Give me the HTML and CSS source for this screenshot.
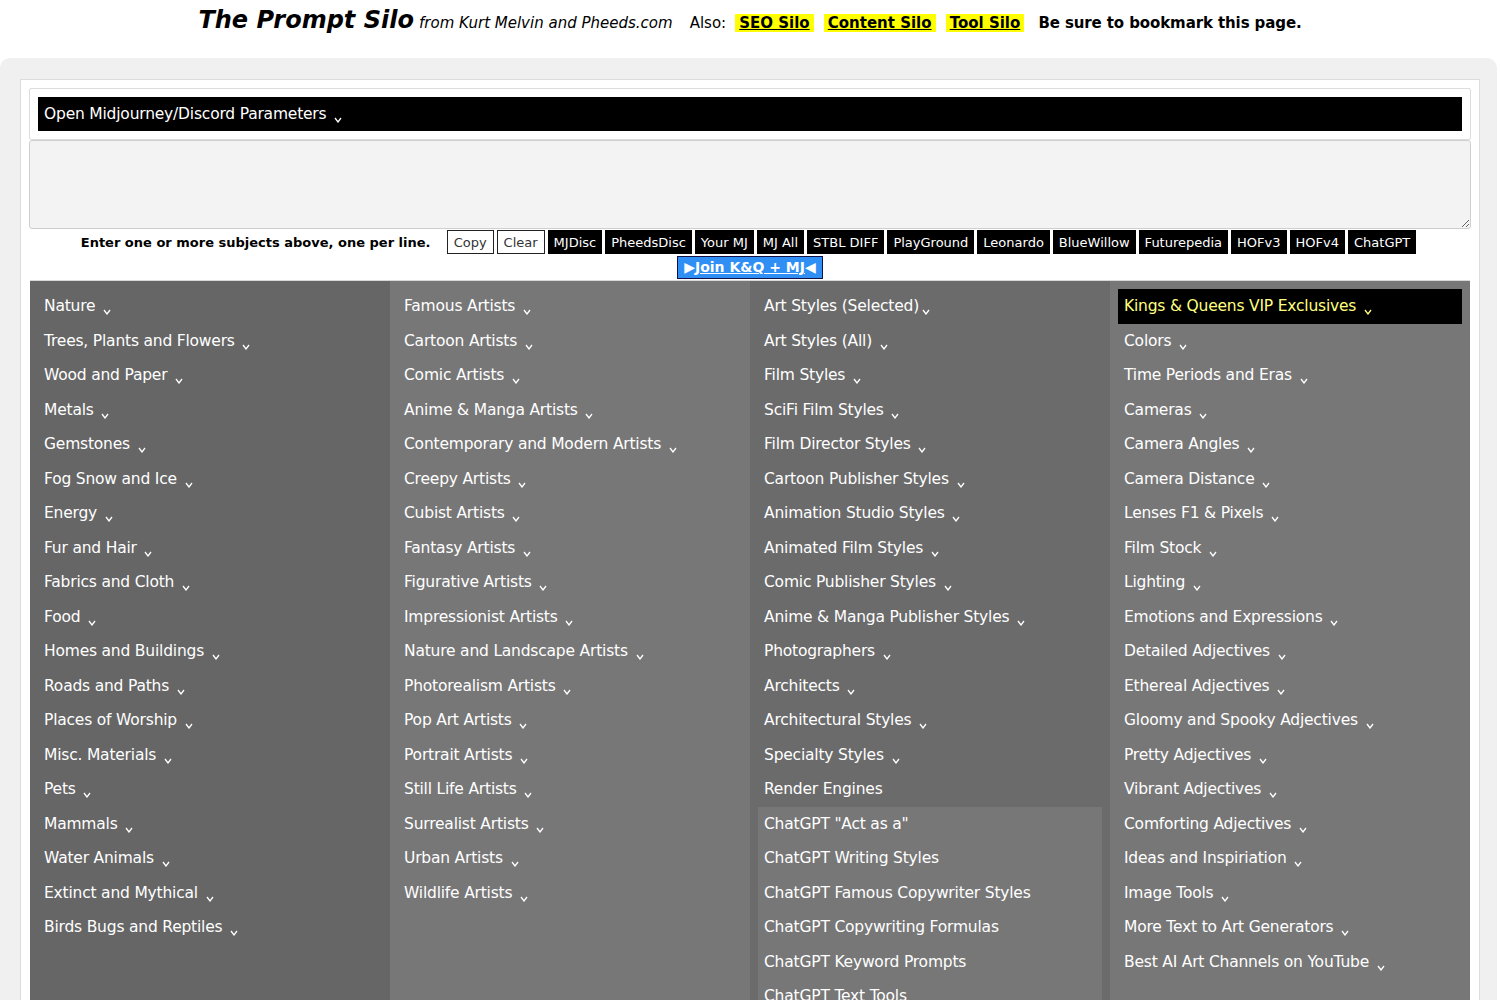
FILE: index.html
```
<html>
<head>
<title>The Prompt Silo</title>
<link rel="stylesheet" href="styles.css">
</head>
<body>
<div class="top">
  <span class="brand">The Prompt Silo</span>
  <span class="from">from Kurt Melvin and Pheeds.com</span>
  <span class="also">Also:</span>
  <a class="hl" href="#">SEO Silo</a>
  <a class="hl" href="#">Content Silo</a>
  <a class="hl" href="#">Tool Silo</a>
  <b class="note">Be sure to bookmark this page.</b>
</div>

<div class="wrap">
 <div class="panel">
  <div class="params">
    <div class="params-bar">Open Midjourney/Discord Parameters <svg class="chev" width="8" height="6" viewBox="0 0 8 6"><polyline points="1,1 4,5 7,1"/></svg></div>
  </div>
  <textarea class="subjects"></textarea>

  <div class="tools">
    <b class="hint">Enter one or more subjects above, one per line.</b>
    <button class="btn light">Copy</button><button class="btn light">Clear</button><button class="btn">MJDisc</button><button class="btn">PheedsDisc</button><button class="btn">Your MJ</button><button class="btn">MJ All</button><button class="btn">STBL DIFF</button><button class="btn">PlayGround</button><button class="btn">Leonardo</button><button class="btn">BlueWillow</button><button class="btn">Futurepedia</button><button class="btn">HOFv3</button><button class="btn">HOFv4</button><button class="btn">ChatGPT</button>
    <div class="join-row"><span class="join">&#9654;<a href="#">Join K&amp;Q + MJ</a>&#9664;</span></div>
  </div>

  <div class="grid">
    <div class="col c1">
      <div class="item">Nature <svg class="chev" width="8" height="6" viewBox="0 0 8 6"><polyline points="1,1 4,5 7,1"/></svg></div>
      <div class="item">Trees, Plants and Flowers <svg class="chev" width="8" height="6" viewBox="0 0 8 6"><polyline points="1,1 4,5 7,1"/></svg></div>
      <div class="item">Wood and Paper <svg class="chev" width="8" height="6" viewBox="0 0 8 6"><polyline points="1,1 4,5 7,1"/></svg></div>
      <div class="item">Metals <svg class="chev" width="8" height="6" viewBox="0 0 8 6"><polyline points="1,1 4,5 7,1"/></svg></div>
      <div class="item">Gemstones <svg class="chev" width="8" height="6" viewBox="0 0 8 6"><polyline points="1,1 4,5 7,1"/></svg></div>
      <div class="item">Fog Snow and Ice <svg class="chev" width="8" height="6" viewBox="0 0 8 6"><polyline points="1,1 4,5 7,1"/></svg></div>
      <div class="item">Energy <svg class="chev" width="8" height="6" viewBox="0 0 8 6"><polyline points="1,1 4,5 7,1"/></svg></div>
      <div class="item">Fur and Hair <svg class="chev" width="8" height="6" viewBox="0 0 8 6"><polyline points="1,1 4,5 7,1"/></svg></div>
      <div class="item">Fabrics and Cloth <svg class="chev" width="8" height="6" viewBox="0 0 8 6"><polyline points="1,1 4,5 7,1"/></svg></div>
      <div class="item">Food <svg class="chev" width="8" height="6" viewBox="0 0 8 6"><polyline points="1,1 4,5 7,1"/></svg></div>
      <div class="item">Homes and Buildings <svg class="chev" width="8" height="6" viewBox="0 0 8 6"><polyline points="1,1 4,5 7,1"/></svg></div>
      <div class="item">Roads and Paths <svg class="chev" width="8" height="6" viewBox="0 0 8 6"><polyline points="1,1 4,5 7,1"/></svg></div>
      <div class="item">Places of Worship <svg class="chev" width="8" height="6" viewBox="0 0 8 6"><polyline points="1,1 4,5 7,1"/></svg></div>
      <div class="item">Misc. Materials <svg class="chev" width="8" height="6" viewBox="0 0 8 6"><polyline points="1,1 4,5 7,1"/></svg></div>
      <div class="item">Pets <svg class="chev" width="8" height="6" viewBox="0 0 8 6"><polyline points="1,1 4,5 7,1"/></svg></div>
      <div class="item">Mammals <svg class="chev" width="8" height="6" viewBox="0 0 8 6"><polyline points="1,1 4,5 7,1"/></svg></div>
      <div class="item">Water Animals <svg class="chev" width="8" height="6" viewBox="0 0 8 6"><polyline points="1,1 4,5 7,1"/></svg></div>
      <div class="item">Extinct and Mythical <svg class="chev" width="8" height="6" viewBox="0 0 8 6"><polyline points="1,1 4,5 7,1"/></svg></div>
      <div class="item">Birds Bugs and Reptiles <svg class="chev" width="8" height="6" viewBox="0 0 8 6"><polyline points="1,1 4,5 7,1"/></svg></div>
    </div>

    <div class="col c2">
      <div class="item">Famous Artists <svg class="chev" width="8" height="6" viewBox="0 0 8 6"><polyline points="1,1 4,5 7,1"/></svg></div>
      <div class="item">Cartoon Artists <svg class="chev" width="8" height="6" viewBox="0 0 8 6"><polyline points="1,1 4,5 7,1"/></svg></div>
      <div class="item">Comic Artists <svg class="chev" width="8" height="6" viewBox="0 0 8 6"><polyline points="1,1 4,5 7,1"/></svg></div>
      <div class="item">Anime &amp; Manga Artists <svg class="chev" width="8" height="6" viewBox="0 0 8 6"><polyline points="1,1 4,5 7,1"/></svg></div>
      <div class="item">Contemporary and Modern Artists <svg class="chev" width="8" height="6" viewBox="0 0 8 6"><polyline points="1,1 4,5 7,1"/></svg></div>
      <div class="item">Creepy Artists <svg class="chev" width="8" height="6" viewBox="0 0 8 6"><polyline points="1,1 4,5 7,1"/></svg></div>
      <div class="item">Cubist Artists <svg class="chev" width="8" height="6" viewBox="0 0 8 6"><polyline points="1,1 4,5 7,1"/></svg></div>
      <div class="item">Fantasy Artists <svg class="chev" width="8" height="6" viewBox="0 0 8 6"><polyline points="1,1 4,5 7,1"/></svg></div>
      <div class="item">Figurative Artists <svg class="chev" width="8" height="6" viewBox="0 0 8 6"><polyline points="1,1 4,5 7,1"/></svg></div>
      <div class="item">Impressionist Artists <svg class="chev" width="8" height="6" viewBox="0 0 8 6"><polyline points="1,1 4,5 7,1"/></svg></div>
      <div class="item">Nature and Landscape Artists <svg class="chev" width="8" height="6" viewBox="0 0 8 6"><polyline points="1,1 4,5 7,1"/></svg></div>
      <div class="item">Photorealism Artists <svg class="chev" width="8" height="6" viewBox="0 0 8 6"><polyline points="1,1 4,5 7,1"/></svg></div>
      <div class="item">Pop Art Artists <svg class="chev" width="8" height="6" viewBox="0 0 8 6"><polyline points="1,1 4,5 7,1"/></svg></div>
      <div class="item">Portrait Artists <svg class="chev" width="8" height="6" viewBox="0 0 8 6"><polyline points="1,1 4,5 7,1"/></svg></div>
      <div class="item">Still Life Artists <svg class="chev" width="8" height="6" viewBox="0 0 8 6"><polyline points="1,1 4,5 7,1"/></svg></div>
      <div class="item">Surrealist Artists <svg class="chev" width="8" height="6" viewBox="0 0 8 6"><polyline points="1,1 4,5 7,1"/></svg></div>
      <div class="item">Urban Artists <svg class="chev" width="8" height="6" viewBox="0 0 8 6"><polyline points="1,1 4,5 7,1"/></svg></div>
      <div class="item">Wildlife Artists <svg class="chev" width="8" height="6" viewBox="0 0 8 6"><polyline points="1,1 4,5 7,1"/></svg></div>
    </div>

    <div class="col c3">
      <div class="item">Art Styles (Selected)<svg class="chev" width="8" height="6" viewBox="0 0 8 6"><polyline points="1,1 4,5 7,1"/></svg></div>
      <div class="item">Art Styles (All) <svg class="chev" width="8" height="6" viewBox="0 0 8 6"><polyline points="1,1 4,5 7,1"/></svg></div>
      <div class="item">Film Styles <svg class="chev" width="8" height="6" viewBox="0 0 8 6"><polyline points="1,1 4,5 7,1"/></svg></div>
      <div class="item">SciFi Film Styles <svg class="chev" width="8" height="6" viewBox="0 0 8 6"><polyline points="1,1 4,5 7,1"/></svg></div>
      <div class="item">Film Director Styles <svg class="chev" width="8" height="6" viewBox="0 0 8 6"><polyline points="1,1 4,5 7,1"/></svg></div>
      <div class="item">Cartoon Publisher Styles <svg class="chev" width="8" height="6" viewBox="0 0 8 6"><polyline points="1,1 4,5 7,1"/></svg></div>
      <div class="item">Animation Studio Styles <svg class="chev" width="8" height="6" viewBox="0 0 8 6"><polyline points="1,1 4,5 7,1"/></svg></div>
      <div class="item">Animated Film Styles <svg class="chev" width="8" height="6" viewBox="0 0 8 6"><polyline points="1,1 4,5 7,1"/></svg></div>
      <div class="item">Comic Publisher Styles <svg class="chev" width="8" height="6" viewBox="0 0 8 6"><polyline points="1,1 4,5 7,1"/></svg></div>
      <div class="item">Anime &amp; Manga Publisher Styles <svg class="chev" width="8" height="6" viewBox="0 0 8 6"><polyline points="1,1 4,5 7,1"/></svg></div>
      <div class="item">Photographers <svg class="chev" width="8" height="6" viewBox="0 0 8 6"><polyline points="1,1 4,5 7,1"/></svg></div>
      <div class="item">Architects <svg class="chev" width="8" height="6" viewBox="0 0 8 6"><polyline points="1,1 4,5 7,1"/></svg></div>
      <div class="item">Architectural Styles <svg class="chev" width="8" height="6" viewBox="0 0 8 6"><polyline points="1,1 4,5 7,1"/></svg></div>
      <div class="item">Specialty Styles <svg class="chev" width="8" height="6" viewBox="0 0 8 6"><polyline points="1,1 4,5 7,1"/></svg></div>
      <div class="item">Render Engines</div>
      <div class="group">
        <div class="item">ChatGPT "Act as a"</div>
        <div class="item">ChatGPT Writing Styles</div>
        <div class="item">ChatGPT Famous Copywriter Styles</div>
        <div class="item">ChatGPT Copywriting Formulas</div>
        <div class="item">ChatGPT Keyword Prompts</div>
        <div class="item">ChatGPT Text Tools</div>
      </div>
    </div>

    <div class="col c4">
      <div class="item vip">Kings &amp; Queens VIP Exclusives <svg class="chev" width="8" height="6" viewBox="0 0 8 6"><polyline points="1,1 4,5 7,1"/></svg></div>
      <div class="item">Colors <svg class="chev" width="8" height="6" viewBox="0 0 8 6"><polyline points="1,1 4,5 7,1"/></svg></div>
      <div class="item">Time Periods and Eras <svg class="chev" width="8" height="6" viewBox="0 0 8 6"><polyline points="1,1 4,5 7,1"/></svg></div>
      <div class="item">Cameras <svg class="chev" width="8" height="6" viewBox="0 0 8 6"><polyline points="1,1 4,5 7,1"/></svg></div>
      <div class="item">Camera Angles <svg class="chev" width="8" height="6" viewBox="0 0 8 6"><polyline points="1,1 4,5 7,1"/></svg></div>
      <div class="item">Camera Distance <svg class="chev" width="8" height="6" viewBox="0 0 8 6"><polyline points="1,1 4,5 7,1"/></svg></div>
      <div class="item">Lenses F1 &amp; Pixels <svg class="chev" width="8" height="6" viewBox="0 0 8 6"><polyline points="1,1 4,5 7,1"/></svg></div>
      <div class="item">Film Stock <svg class="chev" width="8" height="6" viewBox="0 0 8 6"><polyline points="1,1 4,5 7,1"/></svg></div>
      <div class="item">Lighting <svg class="chev" width="8" height="6" viewBox="0 0 8 6"><polyline points="1,1 4,5 7,1"/></svg></div>
      <div class="item">Emotions and Expressions <svg class="chev" width="8" height="6" viewBox="0 0 8 6"><polyline points="1,1 4,5 7,1"/></svg></div>
      <div class="item">Detailed Adjectives <svg class="chev" width="8" height="6" viewBox="0 0 8 6"><polyline points="1,1 4,5 7,1"/></svg></div>
      <div class="item">Ethereal Adjectives <svg class="chev" width="8" height="6" viewBox="0 0 8 6"><polyline points="1,1 4,5 7,1"/></svg></div>
      <div class="item">Gloomy and Spooky Adjectives <svg class="chev" width="8" height="6" viewBox="0 0 8 6"><polyline points="1,1 4,5 7,1"/></svg></div>
      <div class="item">Pretty Adjectives <svg class="chev" width="8" height="6" viewBox="0 0 8 6"><polyline points="1,1 4,5 7,1"/></svg></div>
      <div class="item">Vibrant Adjectives <svg class="chev" width="8" height="6" viewBox="0 0 8 6"><polyline points="1,1 4,5 7,1"/></svg></div>
      <div class="item">Comforting Adjectives <svg class="chev" width="8" height="6" viewBox="0 0 8 6"><polyline points="1,1 4,5 7,1"/></svg></div>
      <div class="item">Ideas and Inspiriation <svg class="chev" width="8" height="6" viewBox="0 0 8 6"><polyline points="1,1 4,5 7,1"/></svg></div>
      <div class="item">Image Tools <svg class="chev" width="8" height="6" viewBox="0 0 8 6"><polyline points="1,1 4,5 7,1"/></svg></div>
      <div class="item">More Text to Art Generators <svg class="chev" width="8" height="6" viewBox="0 0 8 6"><polyline points="1,1 4,5 7,1"/></svg></div>
      <div class="item">Best AI Art Channels on YouTube <svg class="chev" width="8" height="6" viewBox="0 0 8 6"><polyline points="1,1 4,5 7,1"/></svg></div>
    </div>
  </div>
 </div>
</div>
</body>
</html>
```

FILE: styles.css
```
html { background: #fff; }
body { margin: 0; font-family: "DejaVu Sans", Verdana, sans-serif; color: #000; }

/* header line */
.top { height: 58px; text-align: center; padding-top: 6px; box-sizing: border-box; white-space: nowrap; }
.brand { font-size: 24px; font-weight: bold; font-style: italic; }
.from { font-size: 15px; font-style: italic; margin-right: 12px; }
.also { font-size: 15px; margin-right: 4px; }
.hl { font-size: 15px; font-weight: bold; color: #000; background: #ffff00; padding: 0 4px; margin-right: 5px; text-decoration: underline; }
.note { font-size: 15px; margin-left: 4px; letter-spacing: -0.1px; }

/* page frame */
.wrap { background: #f0f0f0; border-radius: 10px 10px 0 0; margin-right: 3px; padding: 21px 17px 0 20px; }
.panel { background: #fff; border: 1px solid #dcdcdc; border-bottom: none; padding: 8px 8px 0; }

.params { border: 1px solid #dcdcdc; border-radius: 2px; padding: 8px; }
.params-bar { background: #000; color: #fff; font-size: 15.5px; letter-spacing: -0.2px; height: 34px; line-height: 34px; padding: 0 6px; }

.subjects { display: block; width: 100%; height: 89px; box-sizing: border-box; margin: 0; background: #f3f3f3; border: 1px solid #cfcfcf; border-radius: 3px; resize: vertical; }

.tools { text-align: center; padding-top: 1px; }
.hint { font-size: 13px; margin-right: 11px; vertical-align: middle; }
.btn { font-family: inherit; font-size: 13px; height: 24px; padding: 0 6px; margin: 0 3px 0 0; border: none; background: #000; color: #fff; vertical-align: middle; }
.btn.light { background: #fff; color: #333; border: 1px solid #222; }
.join-row { padding: 2px 0 1px; line-height: 0; }
.join { display: inline-block; line-height: 21px; font-size: 14px; font-weight: bold; color: #fff; background: #2f8ff5; border: 1px solid #114; padding: 0 6px; }
.join a { color: #fff; }

/* category columns */
.grid { display: grid; grid-template-columns: repeat(4, 1fr); margin: 0 1px; border-top: 1px solid #d8d8d8; min-height: 760px; }
.col { padding: 8px; }
.c1 { background: #666; }
.c2 { background: #777; }
.c3 { background: #6b6b6b; }
.c4 { background: #777; }
.item { color: #fff; font-size: 15.5px; letter-spacing: -0.2px; line-height: 22.5px; padding: 6px; white-space: nowrap; }
.item.vip { background: #000; color: #ffff80; }
.item.vip .chev polyline { stroke: #ffff80; }
.group { background: #777; }
.chev { margin-left: 3px; vertical-align: -4px; }
.chev polyline { fill: none; stroke: #fff; stroke-width: 1.3; }
```
